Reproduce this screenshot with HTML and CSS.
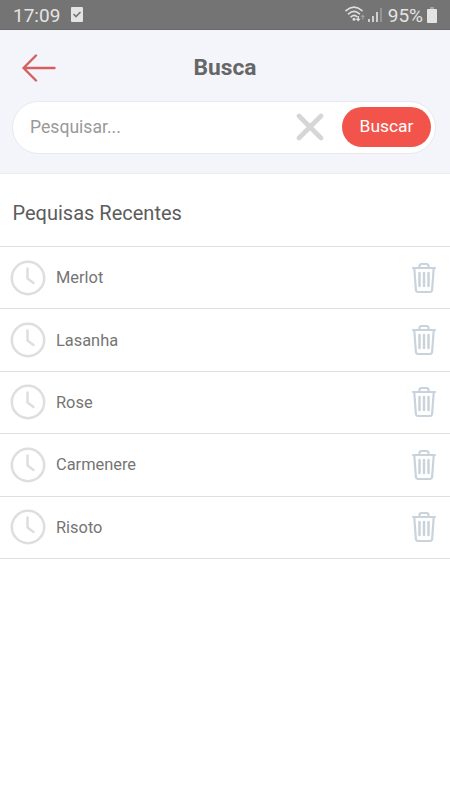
FILE: index.html
```html
<!DOCTYPE html>
<html lang="pt-BR">
<head>
    <meta charset="UTF-8">
    <meta name="viewport" content="width=device-width, initial-scale=1.0">
    <title>Busca</title>
    <link rel="stylesheet" href="styles.css">
</head>
<body>

    <!-- Ícones reutilizados na lista -->
    <svg class="icones" width="0" height="0">
        <symbol id="relogio" viewBox="0 0 36 36">
            <circle cx="18" cy="18" r="16.2" fill="none" stroke="#dedede" stroke-width="2.5"/>
            <path d="M17.5 8.5V18.5L23.5 23" fill="none" stroke="#dedede" stroke-width="2.5" stroke-linecap="round" stroke-linejoin="round"/>
        </symbol>
        <symbol id="lixeira" viewBox="0 0 26 32">
            <g fill="none" stroke="#c9d3dc" stroke-width="2.2" stroke-linecap="round" stroke-linejoin="round">
                <path d="M2 6H24"/>
                <path d="M8.5 5.5V4Q8.5 2 10.5 2H15.5Q17.5 2 17.5 4V5.5"/>
                <path d="M3.3 6.5L4.9 28Q5.1 30 7.1 30H18.9Q20.9 30 21.1 28L22.7 6.5"/>
                <path d="M8.5 11V24M13 11V24M17.5 11V24" stroke-width="2.5"/>
            </g>
        </symbol>
    </svg>

    <div class="status">
        <span class="hora">17:09</span>
        <svg class="check" width="12" height="15" viewBox="0 0 12 15">
            <rect width="12" height="15" rx="1" fill="#e4e4e4"/>
            <path d="M2.5 7L5 9.5L9.5 5" fill="none" stroke="#747474" stroke-width="1.6"/>
        </svg>
        <svg class="wifi" width="21" height="17" viewBox="0 0 21 17">
            <g fill="none" stroke="#e0e0e0" stroke-width="1.6" stroke-linecap="round">
                <path d="M1 4.7Q9 -2.3 17 4.7"/>
                <path d="M3.5 7.8Q9 3 14.5 7.8"/>
                <path d="M6 10.8Q9 8.2 11.5 10.3"/>
            </g>
            <circle cx="9" cy="13.3" r="1.5" fill="#e0e0e0"/>
            <path d="M12.4 10H14V12.8H15.7L13.2 15.6L10.7 12.8H12.4Z" fill="#e0e0e0"/>
            <path d="M17.8 8.3L20 11H18.5V13.5H17.1V11H15.6Z" fill="#a0a0a0"/>
        </svg>
        <svg class="sinal" width="14" height="15" viewBox="0 0 14 15">
            <path d="M1 12V15M5 9V15M9 5V15" stroke="#e0e0e0" stroke-width="1.7"/>
            <path d="M13 1V15" stroke="#a0a0a0" stroke-width="1.5"/>
        </svg>
        <span class="carga">95%</span>
        <svg class="bateria" width="10" height="16" viewBox="0 0 10 16">
            <path d="M3 0H7V2H3Z" fill="#a0a0a0"/>
            <rect y="2" width="10" height="14" rx="1" fill="#e4e4e4"/>
        </svg>
    </div>

    <header>
        <div class="topo">
            <svg class="voltar" width="34" height="28" viewBox="0 0 34 28">
                <path d="M14 1.5L1.5 14L14 26.5M1.5 14H32.5" fill="none" stroke="#d5605e" stroke-width="2.4" stroke-linecap="round" stroke-linejoin="round"/>
            </svg>
            <h1>Busca</h1>
        </div>
        <div class="pesquisa">
            <input type="text" placeholder="Pesquisar...">
            <svg class="limpar" width="28" height="28" viewBox="0 0 28 28">
                <path d="M3 3L25 25M25 3L3 25" stroke="#d6d6d6" stroke-width="4.6" stroke-linecap="round"/>
            </svg>
            <button>Buscar</button>
        </div>
    </header>

    <h2>Pequisas Recentes</h2>

    <ul class="lista">
        <li>
            <svg class="relogio"><use href="#relogio"/></svg>
            <span>Merlot</span>
            <svg class="lixeira"><use href="#lixeira"/></svg>
        </li>
        <li>
            <svg class="relogio"><use href="#relogio"/></svg>
            <span>Lasanha</span>
            <svg class="lixeira"><use href="#lixeira"/></svg>
        </li>
        <li>
            <svg class="relogio"><use href="#relogio"/></svg>
            <span>Rose</span>
            <svg class="lixeira"><use href="#lixeira"/></svg>
        </li>
        <li>
            <svg class="relogio"><use href="#relogio"/></svg>
            <span>Carmenere</span>
            <svg class="lixeira"><use href="#lixeira"/></svg>
        </li>
        <li>
            <svg class="relogio"><use href="#relogio"/></svg>
            <span>Risoto</span>
            <svg class="lixeira"><use href="#lixeira"/></svg>
        </li>
    </ul>

</body>
</html>
```
FILE: styles.css
```css
* {
    box-sizing: border-box;
}

body {
    font-family: Roboto, sans-serif;
    background-color: #fff;
    margin: 0;
}

svg {
    display: block;
    flex-shrink: 0;
}

.icones {
    display: none;
}

.status {
    display: flex;
    align-items: center;
    height: 30px;
    padding: 0 13px;
    background-color: #747474;
    border-bottom: 1px solid #6a6a6a;
    color: #e4e4e4;
    font-size: 19px;
}

.hora,
.carga {
    padding-top: 1px;
}

.check {
    margin-left: 11px;
}

.wifi {
    margin-left: auto;
}

.sinal {
    margin-left: 2px;
}

.carga {
    margin-left: 6px;
}

.bateria {
    margin-left: 4px;
}

header {
    height: 144px;
    padding: 0 14px 0 12px;
    background-color: #f4f5fb;
    border-bottom: 1px solid #ededf1;
}

.topo {
    display: grid;
    grid-template-columns: 1fr auto 1fr;
    align-items: center;
    height: 71px;
    padding-top: 4px;
    padding-left: 2px;
}

.voltar {
    margin-left: 8px;
}

h1 {
    margin: 0;
    color: #666;
    font-size: 22.8px;
    font-weight: 700;
}

.pesquisa {
    display: flex;
    align-items: center;
    height: 53px;
    padding: 0 4px 1px 17px;
    background: white;
    border: 1px solid #e8e8ee;
    border-radius: 27px;
}

input {
    flex: 1;
    min-width: 0;
    padding: 0;
    border: none;
    outline: none;
    font-family: inherit;
    font-size: 17.6px;
}

input::placeholder {
    color: #999;
}

button {
    width: 89px;
    height: 40px;
    margin-left: 18px;
    padding: 0 0 2px;
    border: none;
    border-radius: 20px;
    background-color: #f2544b;
    color: #fff;
    font-family: inherit;
    font-size: 17.4px;
}

h2 {
    height: 72px;
    margin: 0;
    padding-left: 12.5px;
    color: #5c5c5c;
    font-size: 20px;
    font-weight: 400;
    line-height: 78px;
}

.lista {
    margin: 0;
    padding: 0;
    list-style: none;
    border-top: 1px solid #dfdfdf;
}

.lista li {
    display: flex;
    align-items: center;
    height: 62.4px;
    padding: 0 13px 0 9.5px;
    border-bottom: 1px solid #dfdfdf;
    color: #757575;
    font-size: 16.4px;
}

.lista span {
    flex: 1;
    margin-left: 10.5px;
}

.relogio {
    width: 36px;
    height: 36px;
}

.lixeira {
    width: 26px;
    height: 32px;
}
```
